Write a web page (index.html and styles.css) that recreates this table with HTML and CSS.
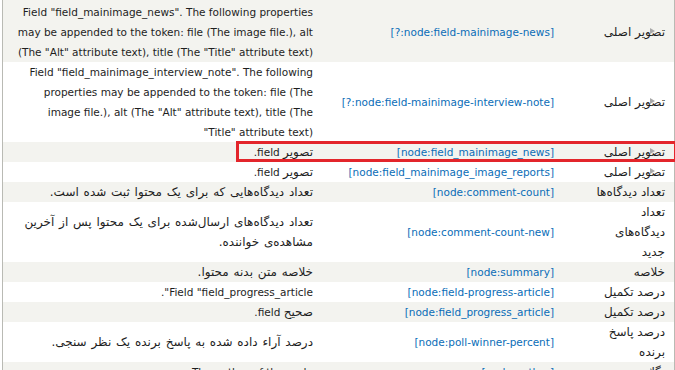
FILE: index.html
```html
<!DOCTYPE html>
<html lang="fa" dir="rtl">
<head>
<meta charset="utf-8">
<title>Tokens</title>
<link rel="stylesheet" href="styles.css">
</head>
<body>
<div class="frame">
  <table class="tokens">
    <colgroup>
      <col class="c-name">
      <col class="c-token">
      <col class="c-desc">
    </colgroup>
    <tbody>
      <tr class="even first">
        <td class="name"><span class="nm">تصویر اصلی<i class="tri"></i></span></td>
        <td class="token"><a href="#" dir="ltr">[?:node:field-mainimage-news]</a></td>
        <td class="desc">Field "field_mainimage_news". The following properties may be appended to the token: file (The image file.), alt (The "Alt" attribute text), title (The "Title" attribute text)</td>
      </tr>
      <tr class="odd">
        <td class="name"><span class="nm">تصویر اصلی<i class="tri"></i></span></td>
        <td class="token"><a href="#" dir="ltr">[?:node:field-mainimage-interview-note]</a></td>
        <td class="desc">Field "field_mainimage_interview_note". The following properties may be appended to the token: file (The image file.), alt (The "Alt" attribute text), title (The "Title" attribute text)</td>
      </tr>
      <tr class="even">
        <td class="name"><span class="nm">تصویر اصلی<i class="tri"></i></span></td>
        <td class="token"><a href="#" dir="ltr">[node:field_mainimage_news]</a></td>
        <td class="desc"><span class="fa">تصویر</span> field.</td>
      </tr>
      <tr class="odd">
        <td class="name"><span class="nm">تصویر اصلی<i class="tri"></i></span></td>
        <td class="token"><a href="#" dir="ltr">[node:field_mainimage_image_reports]</a></td>
        <td class="desc"><span class="fa">تصویر</span> field.</td>
      </tr>
      <tr class="even">
        <td class="name">تعداد دیدگاه‌ها</td>
        <td class="token"><a href="#" dir="ltr">[node:comment-count]</a></td>
        <td class="desc fa">تعداد دیدگاه‌هایی که برای یک محتوا ثبت شده است.</td>
      </tr>
      <tr class="odd">
        <td class="name">تعداد<br>دیدگاه‌های<br>جدید</td>
        <td class="token"><a href="#" dir="ltr">[node:comment-count-new]</a></td>
        <td class="desc fa">تعداد دیدگاه‌های ارسال‌شده برای یک محتوا پس از آخرین<br>مشاهده‌ی خواننده.</td>
      </tr>
      <tr class="even">
        <td class="name">خلاصه</td>
        <td class="token"><a href="#" dir="ltr">[node:summary]</a></td>
        <td class="desc fa">خلاصه متن بدنه محتوا.</td>
      </tr>
      <tr class="odd">
        <td class="name">درصد تکمیل</td>
        <td class="token"><a href="#" dir="ltr">[node:field-progress-article]</a></td>
        <td class="desc">Field "field_progress_article".</td>
      </tr>
      <tr class="even">
        <td class="name">درصد تکمیل</td>
        <td class="token"><a href="#" dir="ltr">[node:field_progress_article]</a></td>
        <td class="desc"><span class="fa">صحیح</span> field.</td>
      </tr>
      <tr class="odd">
        <td class="name">درصد پاسخ<br>برنده</td>
        <td class="token"><a href="#" dir="ltr">[node:poll-winner-percent]</a></td>
        <td class="desc fa">درصد آراء داده شده به پاسخ برنده یک نظر سنجی.</td>
      </tr>
      <tr class="even">
        <td class="name"><span class="nm">نگارنده<i class="tri"></i></span></td>
        <td class="token"><a href="#" dir="ltr">[node:author]</a></td>
        <td class="desc">The author of the node.</td>
      </tr>
    </tbody>
  </table>
  <div class="highlight"></div>
</div>
</body>
</html>
```

FILE: styles.css
```css
html, body {
  margin: 0;
  padding: 0;
  background: #ffffff;
}

body {
  font-family: "DejaVu Sans", "Liberation Sans", sans-serif;
  font-size: 10.5px;
  line-height: 20px;
  color: #1e1e1e;
}

.frame {
  position: relative;
  width: 671px;
  border-left: 1px solid #b9bab4;
  border-right: 1px solid #b9bab4;
}

.tokens {
  width: 671px;
  border-collapse: collapse;
  border-spacing: 0;
  table-layout: fixed;
}

.c-name { width: 84px; }
.c-token { width: 268px; }
.c-desc { width: 319px; }

.tokens td {
  padding: 0;
  vertical-align: middle;
  text-align: right;
}

.tokens tr.even { background: #f3f3ef; }
.tokens tr.odd { background: #ffffff; }

.tokens td.name {
  padding-right: 9px;
  padding-left: 4px;
  font-size: 12px;
  white-space: nowrap;
}

.tokens td.token {
  padding-right: 36px;
  padding-left: 8px;
}

.tokens td.desc {
  padding-right: 9px;
  padding-left: 11px;
}

.tokens tr.first td.name,
.tokens tr.first td.token,
.tokens tr.first td.desc { padding-top: 2px; }

.fa,
.tokens td.desc.fa {
  font-size: 12px;
  word-spacing: 1px;
}

.token a {
  color: #0a6db7;
  text-decoration: none;
  unicode-bidi: isolate;
}

.nm {
  position: relative;
  display: inline-block;
}

.tri {
  position: absolute;
  right: 10px;
  top: 6px;
  width: 0;
  height: 0;
  border-left: 5px solid #a8a8a8;
  border-top: 3.5px solid transparent;
  border-bottom: 3.5px solid transparent;
}

.highlight {
  position: absolute;
  left: 233px;
  top: 141px;
  width: 435px;
  height: 15px;
  border: 3px solid #e3252b;
}
```
